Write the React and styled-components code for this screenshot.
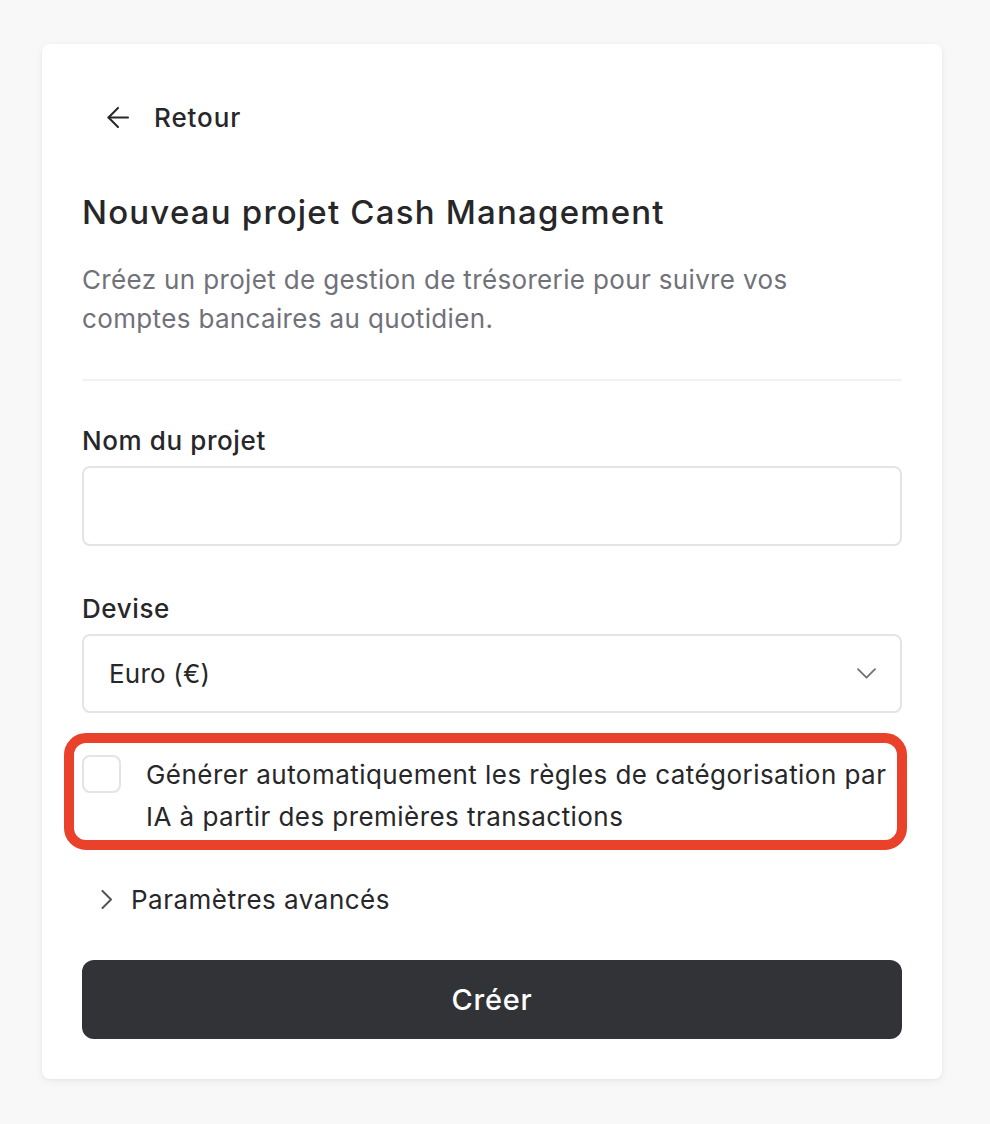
import React from "react";
import styled, { createGlobalStyle } from "styled-components";

const GlobalStyle = createGlobalStyle`
  * { box-sizing: border-box; }
  html, body { margin: 0; padding: 0; }
  body {
    background: #f8f8f8;
    font-family: Inter, "Noto Sans", "Liberation Sans", sans-serif;
    color: #27272a;
    -webkit-font-smoothing: antialiased;
  }
`;

const Page = styled.div`
  min-height: 1124px;
  padding: 44px 48px 46px 42px;
`;

const Card = styled.div`
  width: 900px;
  background: #ffffff;
  border-radius: 8px;
  box-shadow: 0 2px 10px rgba(0, 0, 0, 0.06), 0 1px 3px rgba(0, 0, 0, 0.04);
  padding: 40px;
  display: flex;
  flex-direction: column;
`;

const BackButton = styled.button`
  align-self: flex-start;
  display: flex;
  align-items: center;
  gap: 25px;
  height: 66px;
  padding: 0 24px 0 25px;
  border: none;
  background: transparent;
  font-family: inherit;
  font-size: 26px;
  font-weight: 500;
  letter-spacing: 0.9px;
  color: #27272a;
  cursor: pointer;
`;

const Title = styled.h1`
  margin: 42px 0 0 0;
  font-size: 33px;
  line-height: 40px;
  font-weight: 500;
  color: #27272a;
  letter-spacing: 1.2px;
`;

const Description = styled.p`
  margin: 28px 0 0 0;
  font-size: 26px;
  line-height: 39px;
  color: #71717a;
  font-weight: 400;
  letter-spacing: 0.35px;
`;

const Divider = styled.hr`
  margin: 41px 0 0 0;
  border: none;
  height: 2px;
  background: #f2f2f3;
`;

const Field = styled.div`
  display: flex;
  flex-direction: column;
  gap: 7px;
  margin-top: ${(p) => p.$mt}px;
`;

const Label = styled.label`
  font-size: 26px;
  line-height: 36px;
  font-weight: 500;
  letter-spacing: 0.6px;
  color: #27272a;
`;

const TextInput = styled.input`
  height: 80px;
  width: 100%;
  border: 2px solid #e4e4e7;
  border-radius: 8px;
  padding: 0 26px;
  font-family: inherit;
  font-size: 26px;
  color: #27272a;
  background: #fff;
  outline: none;
`;

const SelectBox = styled.div`
  height: 79px;
  border: 2px solid #e4e4e7;
  border-radius: 8px;
  padding: 0 24px 0 25px;
  display: flex;
  align-items: center;
  justify-content: space-between;
  font-size: 26px;
  letter-spacing: 0.2px;
  color: #27272a;
`;

const CheckRow = styled.div`
  position: relative;
  margin-top: 41px;
  display: flex;
  align-items: flex-start;
  gap: 25px;

  &::after {
    content: "";
    position: absolute;
    top: -21px;
    left: -18px;
    right: -5px;
    bottom: -12px;
    border: 10px solid #e9412a;
    border-radius: 22px;
    pointer-events: none;
  }
`;

const CheckBox = styled.span`
  flex: none;
  width: 39px;
  height: 38px;
  margin-top: 1px;
  border: 2px solid #e4e4e7;
  border-radius: 8px;
  background: #fff;
`;

const CheckText = styled.span`
  font-size: 26px;
  line-height: 42px;
  color: #27272a;
  letter-spacing: 0.45px;
`;

const Advanced = styled.button`
  align-self: flex-start;
  margin-top: 43px;
  display: flex;
  align-items: center;
  gap: 19px;
  padding: 0 0 0 19px;
  height: 36px;
  border: none;
  background: transparent;
  font-family: inherit;
  font-size: 26px;
  letter-spacing: 0.5px;
  color: #27272a;
  cursor: pointer;
`;

const Submit = styled.button`
  margin-top: 43px;
  height: 79px;
  width: 100%;
  border: none;
  border-radius: 12px;
  background: #323337;
  color: #ffffff;
  font-family: inherit;
  font-size: 29px;
  font-weight: 500;
  letter-spacing: 0.8px;
  cursor: pointer;
`;

const ArrowLeft = () => (
  <svg width="22" height="21" viewBox="0 0 22 21" fill="none" stroke="#27272a" strokeWidth="2" strokeLinecap="round" strokeLinejoin="round">
    <path d="M11 1 1.5 10.5 11 20" />
    <path d="M21 10.5H1.5" />
  </svg>
);

const ChevronDown = () => (
  <svg width="19" height="11" viewBox="0 0 19 11" fill="none" stroke="#71717a" strokeWidth="1.8" strokeLinecap="round" strokeLinejoin="round">
    <path d="M1 1.2 9.5 9.7 18 1.2" />
  </svg>
);

const ChevronRight = () => (
  <svg width="11" height="19" viewBox="0 0 11 19" fill="none" stroke="#52525b" strokeWidth="2" strokeLinecap="round" strokeLinejoin="round">
    <path d="M1.5 1 10 9.5 1.5 18" />
  </svg>
);

export default function App() {
  return (
    <>
      <GlobalStyle />
      <Page>
        <Card>
          <BackButton>
            <ArrowLeft />
            Retour
          </BackButton>
          <Title>Nouveau projet Cash Management</Title>
          <Description>
            Créez un projet de gestion de trésorerie pour suivre vos
            <br />
            comptes bancaires au quotidien.
          </Description>
          <Divider />
          <Field $mt={42}>
            <Label>Nom du projet</Label>
            <TextInput type="text" />
          </Field>
          <Field $mt={45}>
            <Label>Devise</Label>
            <SelectBox>
              <span>Euro (€)</span>
              <ChevronDown />
            </SelectBox>
          </Field>
          <CheckRow>
            <CheckBox />
            <CheckText>
              Générer automatiquement les règles de catégorisation par
              <br />
              IA à partir des premières transactions
            </CheckText>
          </CheckRow>
          <Advanced>
            <ChevronRight />
            Paramètres avancés
          </Advanced>
          <Submit>Créer</Submit>
        </Card>
      </Page>
    </>
  );
}
